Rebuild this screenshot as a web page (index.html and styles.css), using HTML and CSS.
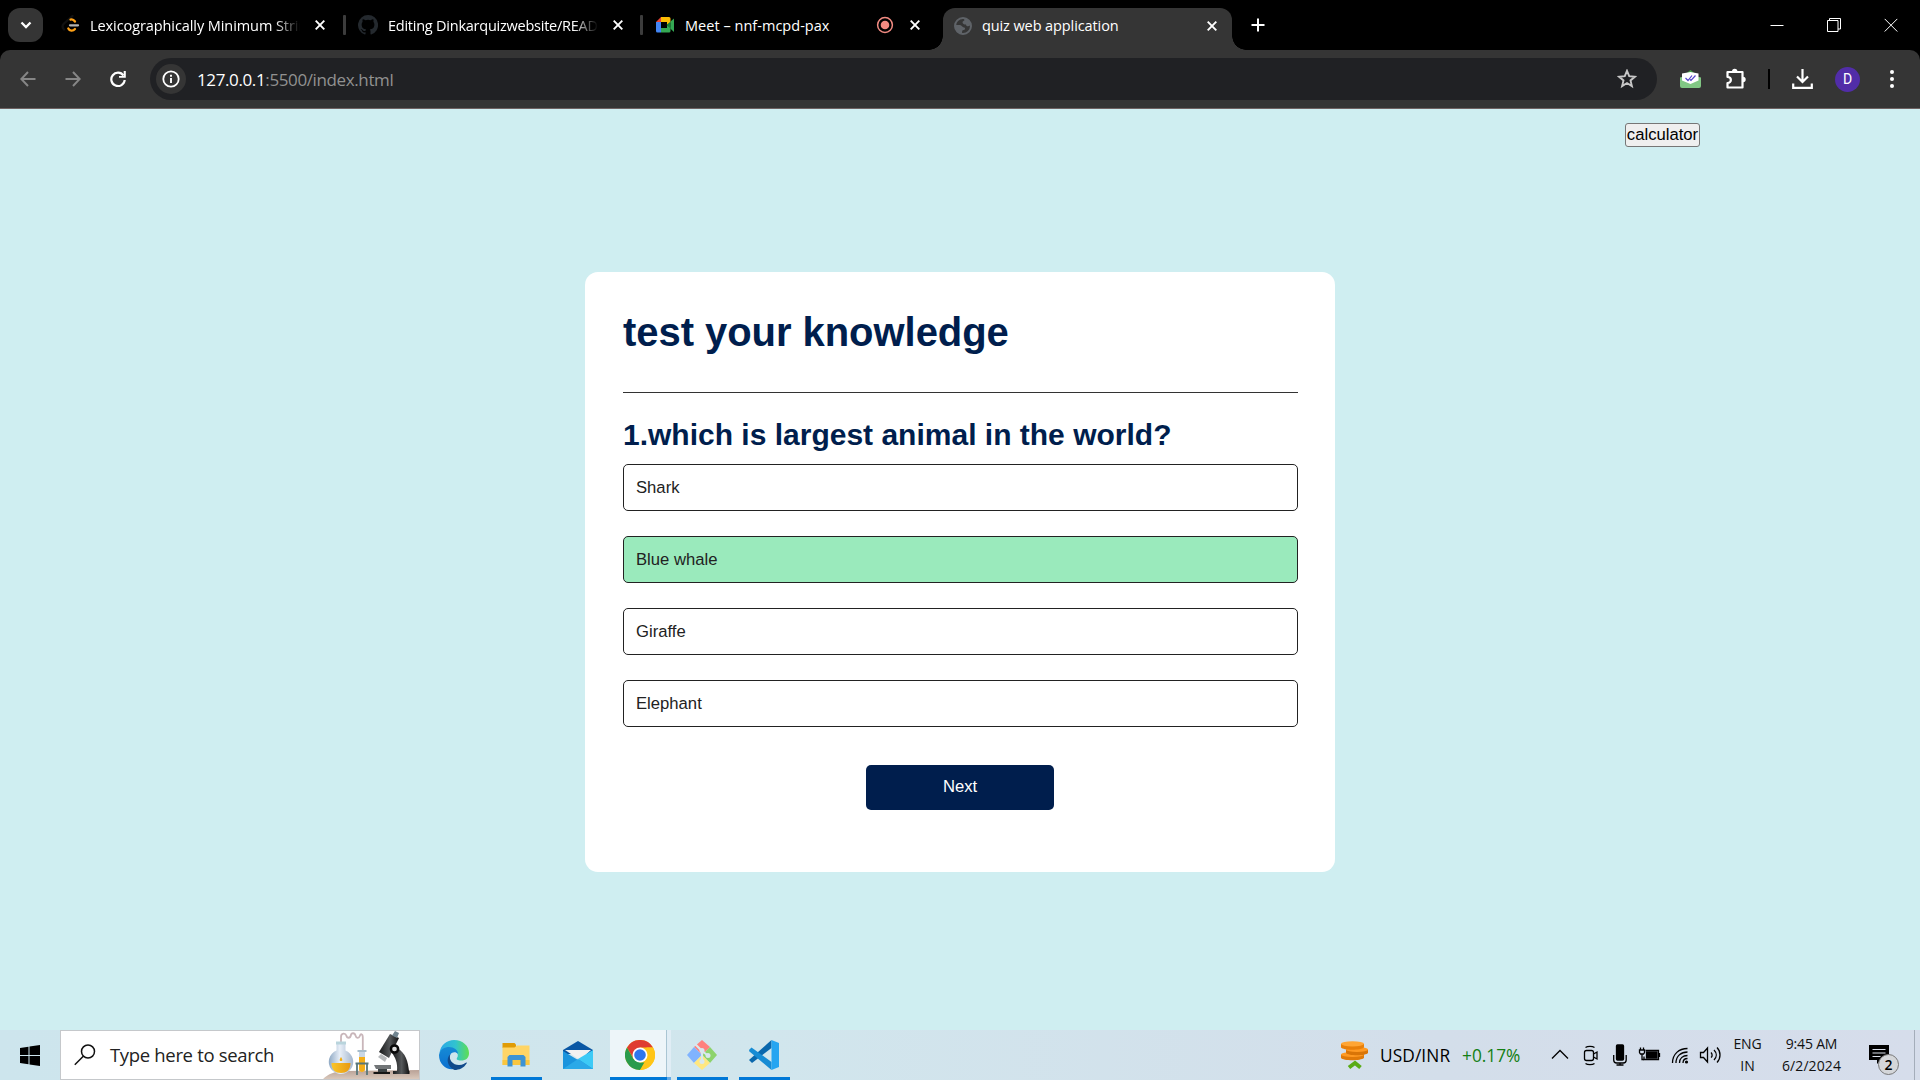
FILE: index.html
```html
<!DOCTYPE html>
<html lang="en">
<head>
<meta charset="utf-8">
<title>quiz web application</title>
<link rel="stylesheet" href="styles.css">
</head>
<body>
<header class="tabstrip">
  <div class="tab-search"><svg width="12" height="8" viewBox="0 0 12 8"><path d="M1.5 1.5 6 6l4.500-4.500" fill="none" stroke="#fff" stroke-width="2.300"/></svg></div>
  <div class="tab tab-first">
    <svg class="fav" viewBox="0 0 20 20" fill="none" stroke-width="2.300" stroke-linecap="round"><path d="M12.500 1 4 8.500c-2 2-2 4 0 6" stroke="#111"/><path d="M10.500 4.600c1.800-.6 3.300.2 4.500 1.900M8.300 13.500c1.200 2.400 4.600 2.900 6.700.5" stroke="#ffa116"/><path d="M10 10.300h8" stroke="#b3b3b3"/></svg>
    <span class="title t1 fade">Lexicographically Minimum Strin</span>
    <svg class="x" viewBox="0 0 10 10"><path d="m.7.7 8.600 8.600m0-8.600L.7 9.300"/></svg>
  </div>
  <i class="split"></i>
  <div class="tab tab-second">
    <svg class="fav" viewBox="0 0 16 16"><path fill="#24292e" d="M8 0a8 8 0 0 0-2.530 15.590c.4.070.55-.17.55-.38v-1.340c-2.230.48-2.700-1.070-2.700-1.070-.36-.92-.89-1.170-.89-1.170-.73-.5.050-.49.050-.49.810.060 1.230.83 1.230.83.72 1.230 1.880.87 2.330.66.070-.52.280-.87.510-1.070-1.780-.2-3.640-.89-3.640-3.950 0-.87.310-1.590.82-2.150-.08-.2-.36-1.020.080-2.120 0 0 .67-.21 2.200.82a7.600 7.600 0 0 1 4 0c1.530-1.040 2.200-.82 2.200-.82.440 1.100.160 1.920.080 2.120.51.56.82 1.270.82 2.150 0 3.070-1.870 3.750-3.650 3.950.29.250.54.730.54 1.480v2.190c0 .21.150.46.550.38A8 8 0 0 0 8 0"/></svg>
    <span class="title t2 fade">Editing Dinkarquizwebsite/READ</span>
    <svg class="x" viewBox="0 0 10 10"><path d="m.7.7 8.600 8.600m0-8.600L.7 9.300"/></svg>
  </div>
  <i class="split"></i>
  <div class="tab tab-meet">
    <svg class="fav" viewBox="0 0 20 20"><path fill="#ea4335" d="M1 7 6 2v5z"/><path fill="#4285f4" d="M1 7h5v6H1zM1 13h5v4.500H2.500A1.500 1.500 0 0 1 1 16z"/><path fill="#fbbc04" d="M6 2h8a1.500 1.500 0 0 1 1.500 1.500v4L12 10V7H6z"/><path fill="#34a853" d="M6 13h6v-3l3.500 2.500v3.500a1.500 1.500 0 0 1-1.500 1.500H6z"/><path fill="#188038" d="m11.500 10 4-3.500v7z"/><path fill="#34a853" d="m15.500 6.500 3.500-3v13.500l-3.500-3.300z"/></svg>
    <span class="title t3">Meet – nnf-mcpd-pax</span>
    <svg class="rec" viewBox="0 0 18 18"><circle cx="9" cy="9" r="7.400" fill="none" stroke="#f28b82" stroke-width="1.500"/><circle cx="9" cy="9" r="4.300" fill="#f28b82"/></svg>
    <svg class="x" viewBox="0 0 10 10"><path d="m.7.7 8.600 8.600m0-8.600L.7 9.300"/></svg>
  </div>
  <div class="tab tab-active">
    <svg class="globe" viewBox="0 0 18 18"><circle cx="9" cy="9" r="8" fill="none" stroke="#5f6368" stroke-width="2"/><path fill="#5f6368" d="M1.500 8h4.500c2 0 2 2.500 4 2.500 1.500 0 1.500 2.500-.5 2.500-1.500 0-1.500 2-1.500 4L3 15 1 10zM9.500 1l3 .5 3.500 3.500.5 3c-2 2-4.500 1.500-4.500-.5-2 0-3.500-.5-3.500-2.500 0-1 2-1 2-2z"/></svg>
    <span class="title t4">quiz web application</span>
    <svg class="x" viewBox="0 0 10 10"><path d="m.7.7 8.600 8.600m0-8.600L.7 9.300"/></svg>
  </div>
  <svg class="plus" viewBox="0 0 14 14"><path d="M7 .5v13M.5 7h13" stroke="#fff" stroke-width="2"/></svg>
  <div class="window-controls">
    <svg viewBox="0 0 14 14"><path d="M.5 7.500h13"/></svg>
    <svg viewBox="0 0 14 14"><path d="M.5 2.500h10.500v11H.5zM2.500 2.500v-2h11v10.500h-2.500"/></svg>
    <svg viewBox="0 0 14 14"><path d="m.7.9 12.600 12.600m0-12.600L.7 13.500"/></svg>
  </div>
</header>

<nav class="toolbar">
  <svg class="nav-icon dim" viewBox="0 0 16 16"><path d="M15.500 8H1.500M8 1 1.300 8 8 15"/></svg>
  <svg class="nav-icon dim" viewBox="0 0 16 16"><path d="M.5 8h14M8 1l6.700 7L8 15"/></svg>
  <svg class="nav-icon reload" viewBox="0 0 16 16"><path d="M13.500 4.500A6.700 6.700 0 1 0 14.700 9"/><path d="M15.800 0v6.800H9V5h4.700V0z" fill="#fff" stroke="none"/></svg>
  <div class="omnibox">
    <span class="site-info"><svg width="18" height="18" viewBox="0 0 18 18"><circle cx="9" cy="9" r="7.700" fill="none" stroke="#fff" stroke-width="1.800"/><path d="M9 8v5M9 4.800v1.900" stroke="#fff" stroke-width="1.900"/></svg></span>
    <span class="url"><b>127.0.0.1</b>:5500/index.html</span>
    <svg class="star" viewBox="0 0 20 20"><path d="m10 1.800 2.200 5.400 5.700.5-4.400 3.700 1.400 5.700L10 14l-4.900 3.100 1.400-5.700-4.400-3.700 5.700-.5z" fill="none" stroke="#c7c7c7" stroke-width="1.900"/></svg>
  </div>
  <svg class="mail-ext" viewBox="0 0 21 19"><path fill="#43a047" d="m10.500 0 5 4h-10z"/><path fill="#81c784" d="M0 7.500 10.500 5 21 7.500V16a2 2 0 0 1-2 2H2a2 2 0 0 1-2-2z"/><path fill="#fff" d="M2 3.500 10.500 2 18.500 3.500v7l-8 3.500L2 10.500z"/><path d="m5.500 8 2.500 2.500L12 5.500M10 9.500l1 1 4.500-5" fill="none" stroke="#5546c8" stroke-width="1.200"/></svg>
  <svg class="puzzle" viewBox="0 0 22 22"><path d="M2.500 4h15v15.500h-15v-4.500c4.500 0 4.500-6 0-6z" fill="none" stroke="#fff" stroke-width="2.200" stroke-linejoin="round"/><path fill="#fff" d="M7 3.500a2.700 2.700 0 0 1 5.400 0zM18 8.800a2.700 2.700 0 0 1 0 5.400z"/></svg>
  <i class="tool-split"></i>
  <svg class="download" viewBox="0 0 21 20"><path d="M10.500 0v12.500M5 7.500l5.500 5.500L16 7.500M1.200 14.500v4.300h18.600v-4.300" fill="none" stroke="#fff" stroke-width="2.200"/></svg>
  <span class="avatar">D</span>
  <svg class="dots" viewBox="0 0 4 18"><circle cx="2" cy="2" r="2"/><circle cx="2" cy="9" r="2"/><circle cx="2" cy="16" r="2"/></svg>
</nav>

<main class="page">
  <button class="calculator">calculator</button>
  <section class="quiz">
    <h1>test your knowledge</h1>
    <h2>1.which is largest animal in the world?</h2>
    <div class="answers">
      <button>Shark</button>
      <button class="correct">Blue whale</button>
      <button>Giraffe</button>
      <button>Elephant</button>
    </div>
    <button class="next">Next</button>
  </section>
</main>

<footer class="taskbar">
  <div class="start"><svg width="20" height="21" viewBox="0 0 20 21"><path d="M0 3 8.500 1.800V10H0zM9.500 1.600 20 0v10H9.500zM0 11h8.500v8.300L0 18zM9.500 11H20v10L9.500 19.400z"/></svg></div>
  <div class="search">
    <svg class="lens" viewBox="0 0 22 22"><circle cx="14" cy="7.500" r="6.500"/><path d="M9.300 12.300.8 20.800"/></svg>
    <span class="search-text">Type here to search</span>
    <svg class="art" viewBox="0 0 96 48">
      <defs>
        <linearGradient id="glass" x1="0" x2="1"><stop offset="0" stop-color="#8fa9c4"/><stop offset=".45" stop-color="#e8eff8"/><stop offset="1" stop-color="#a4b6cd"/></linearGradient>
        <linearGradient id="gold" x1="0" x2="1"><stop offset="0" stop-color="#fac52a"/><stop offset="1" stop-color="#e89a12"/></linearGradient>
        <linearGradient id="desk" x1="0" x2="0" y1="0" y2="1"><stop offset="0" stop-color="#b9a196"/><stop offset="1" stop-color="#d9c8bb"/></linearGradient>
        <linearGradient id="steel" x1="0" x2="1"><stop offset="0" stop-color="#161819"/><stop offset=".55" stop-color="#56595b"/><stop offset="1" stop-color="#111"/></linearGradient>
      </defs>
      <path d="M0 48c5-5 12-8 22-8l74-1v9z" fill="url(#desk)"/>
      <g transform="translate(1 0)">
      <path d="M17 11V6c0-4.500 4.500-4 5.300-1.500.7 3 4 3 4.500 0s4-3 4.700 0 3.500 3 4.300.5 3-2.500 3 1.500V20" fill="none" stroke="#c9b6ba" stroke-width="1.800"/>
      <path d="M12.500 11h9v8.500a12.200 12.200 0 1 1-9 0z" fill="url(#glass)"/>
      <path d="M7.500 32h19c0 7-4 10-9.500 10s-9.500-3-9.500-10z" fill="url(#gold)"/>
      <path d="M17 26c-2 3-1.500 4 0 4s2-1 0-4" fill="#f3ad14"/><path d="M12 10.500h10v3H12z" fill="#b9d4dc"/>
      <path d="M35 20h6v18a3 3 0 0 1-6 0z" fill="#c8d7e6"/><path d="M35 26h6v12a3 3 0 0 1-6 0z" fill="#f4ae19"/>
      <path d="M31.500 32.500h13M33 32v12M43 32v12" fill="none" stroke="#58777a" stroke-width="1.800"/><path d="M33.500 19h9v2h-9z" fill="#a7bdcc"/>
      <path d="m66 3 9 4-10 20-10-6z" fill="url(#steel)"/><path d="m71 0 4 2-2 5-5-2.500z" fill="#718590"/><path d="m57 23 6 4-2 4-7-5z" fill="#b5b8ba"/>
      <path d="M73 17c9 5 11 14 12 23h.5v3H69v-3h4c1-8-2-14-5-18z" fill="url(#steel)"/><circle cx="70.500" cy="18" r="3.600" fill="#ddd" stroke="#080808" stroke-width="2.500"/>
      <path d="M50 34h17v4H52z" fill="#727678"/><path d="M49.500 41H66v2H49.500z" fill="#151515"/><path d="M54 38h9v3h-9z" fill="#3c4244"/>
      </g>
    </svg>
  </div>
  <div class="apps">
    <div class="app"><svg viewBox="0 0 30 30"><defs><linearGradient id="ea" x1="0" x2="1"><stop offset="0" stop-color="#2aa7e8"/><stop offset=".55" stop-color="#31c3cf"/><stop offset="1" stop-color="#5fdf50"/></linearGradient><linearGradient id="eb" x1="0" x2="0" y1="0" y2="1"><stop offset="0" stop-color="#168bd5"/><stop offset="1" stop-color="#0b6fcf"/></linearGradient></defs><path fill="url(#ea)" d="M.5 13C1.500 5 8 0 15 0c9 0 15 6 15 13 0 5-3 7.500-8 7.500-3.500 0-5-1-4-2.500 1.500-2 1-5-1.500-6.500C12 8 4 8 .5 13z"/><path fill="url(#eb)" d="M0 15C1 9 6 7 10 7c5 0 9 3 9 7-2-3-7-2-8 1-2 6 2 11 7 13-8 4-18-2-18-13z"/><path fill="#114a8b" d="M11.500 14C9 20 14 25 20 25c4 0 6-2 7.500-2.500.5 0 .5.500 0 1C25 28 20 30 15.500 30 9 27 6 19 11.500 14z"/></svg></div>
    <div class="app running"><svg viewBox="0 0 30 30"><path fill="#e09b05" d="M1.500 3h12l1.500 1.500V8H1.500z"/><path fill="#ffd566" d="M1.500 7.500h12l2.500-2h12.500V25h-27z"/><path fill="#f9c63f" d="M1.500 20h27v5h-27z"/><path fill="#3c93d4" d="M8.500 15h14l2 2v9.500h-5V20h-8v6.500h-5V17z"/></svg></div>
    <div class="app"><svg viewBox="0 0 30 30"><path fill="#0a57a4" d="M0 10 15 1l15 9v4H0z"/><path fill="#f2f1f1" d="M2 10h26L17 20z"/><path fill="#1b94dd" d="M0 11v18h30V11L15 20z"/><path fill="#3dcaf6" d="m30 10-15 9 15 10z"/><path fill="#2ba9e8" d="M0 29 15 19l15 10z"/></svg></div>
    <div class="app running focused"><svg viewBox="0 0 30 30"><circle cx="15" cy="15" r="15" fill="#ffc517"/><path fill="#df3d31" d="M2 7.500a15 15 0 0 1 26 0H15l-6.500 11z"/><path fill="#2a9b4c" d="M2 7.500 8.500 19 15 22.500h6.500L15 30A15 15 0 0 1 2 7.500z"/><path fill="#ffc517" d="M28 7.500A15 15 0 0 1 15 30l6.500-11.200V7.500z"/><circle cx="15" cy="15" r="7.500" fill="#fff"/><circle cx="15" cy="15" r="5.800" fill="#2f76ed"/></svg></div>
    <div class="app running"><svg viewBox="0 0 30 30"><path fill="#ff817e" d="M15 0 7 7l8 8 8-8z"/><path fill="#80b3ff" d="M7 7 0 15l7 8 8-8z"/><path fill="#8dd36c" d="m23 7 7 8-7 8-8-8z"/><path fill="#ffe780" d="m15 15-8 8 8 7 8-7z"/><path d="m8 4 7 7v12M15 11l6.500 5" fill="none" stroke="#d8e8ef" stroke-width="2.200"/><g fill="#d8e8ef"><circle cx="15" cy="10.500" r="2.500"/><circle cx="15" cy="21.500" r="2.500"/><circle cx="21" cy="15.500" r="2.500"/></g></svg></div>
    <div class="app running"><svg viewBox="0 0 30 30"><path fill="#0a68ad" d="M0 20 22.500 0v8L3 23z"/><path fill="#178cd4" d="m0 10 2.500-2.500L22.500 22v8L.5 11.500z"/><path fill="#26a5f1" d="m22.500 0 7.500 3v24l-7.500 3z"/></svg></div>
  </div>
  <div class="finance">
    <svg width="29" height="30" viewBox="0 0 29 30"><path d="M1 14.500v3.500c2 3 20 3 23 0v-3.500z" fill="#e07a08"/><ellipse cx="12.500" cy="14.500" rx="11.500" ry="2.500" fill="#ff9a22"/><path d="M6 9.500v3.500c2 3 20 3 22 0V9.500z" fill="#d97507"/><ellipse cx="17" cy="9.500" rx="11" ry="2.500" fill="#ff9a22"/><path d="M1 4v3.500c2 3 20 3 23 0V4z" fill="#e87f0a"/><ellipse cx="12.500" cy="3.800" rx="11.500" ry="2.600" fill="#ffa534"/><path d="m9 27.500 6-4.500 5.500 4.500" fill="none" stroke="#5aab16" stroke-width="4"/></svg>
    <span class="pair">USD/INR</span><span class="gain">+0.17%</span>
  </div>
  <div class="tray">
    <svg viewBox="0 0 24 24"><path d="m4 15.500 8-8 8 8"/></svg>
    <svg viewBox="0 0 24 24"><rect x="6.500" y="7.500" width="9" height="10" rx="2"/><path d="m15.500 11 3.500-2v7l-3.500-2M7.500 4.500c2-1.500 7-1.500 9 0M7.500 20.500c2 1.500 7 1.500 9 0"/></svg>
    <svg viewBox="0 0 24 24"><rect x="8.500" y="2" width="7" height="15" rx="1" fill="#000"/><path d="M5.700 12v5c0 2 1 3 3 3h6.500c2 0 3-1 3-3v-5M12 20v2M8.500 22h7"/></svg>
    <svg viewBox="0 0 24 24"><path d="M7.500 7.500h13v9H6v-3"/><path d="M8.500 9h10.500v6H8.500z" fill="#000"/><path d="M21.500 10v4M2.500 4.500v2.500M5.500 4.500v2.500M1.500 7h5v2.500L5.500 11h-3l-1-1.500zM4 11v5.500h2"/></svg>
    <svg viewBox="0 0 24 24"><path d="M4.500 20C4.500 11 11 5.500 19.500 5.500M8 20c0-7 5-11 11.500-11M11.500 20c0-5 3.500-7.500 8-7.500M15 20c0-3 2-4.500 4.500-4.500"/><circle cx="18.500" cy="19" r="1.600" fill="#000" stroke="none"/></svg>
    <svg viewBox="0 0 24 24"><path d="M2.500 9.500h3L9.500 5v14l-4-4.500h-3zM13 9.500c1.500 1.500 1.500 4 0 5M16 7c3 3 3 7 0 10M19 4.500c4 4 4 11 0 15"/></svg>
  </div>
  <div class="lang"><span>ENG</span><span>IN</span></div>
  <div class="clock"><span class="time">9:45 AM</span><span class="date">6/2/2024</span></div>
  <div class="notice"><svg width="20" height="20" viewBox="0 0 20 20"><path d="M0 0h20v15h-8l-4 4v-4H0z"/><path d="M3.500 4.500h13M3.500 8h13M3.500 11.500h8" stroke="#d9dfea" stroke-width="1.200"/></svg><span class="count">2</span></div>
  <i class="show-desktop"></i>
</footer>
</body>
</html>
```
FILE: styles.css
```css
* { box-sizing: border-box; }
body {
  margin: 0;
  width: 1920px;
  height: 1080px;
  overflow: hidden;
  display: flex;
  flex-direction: column;
  background: #000;
  font-family: "Open Sans", "Noto Sans", sans-serif;
}
svg { display: block; flex: none; }
button { font-family: "Liberation Sans", Arial, sans-serif; font-size: 16.667px; }

/* Tab strip */
.tabstrip { height: 50px; flex: none; display: flex; align-items: center; padding-left: 8px; color: #fff; }
.tab-search { width: 35px; height: 34px; border-radius: 12px; background: #353535; display: flex; align-items: center; justify-content: center; margin-right: 3px; }
.tab { height: 42px; display: flex; align-items: center; padding-left: 12px; }
.tab-first { width: 297px; padding-left: 14px; padding-right: 18px; }
.tab-second { width: 294px; padding-right: 17px; }
.tab-meet { width: 300px; padding-right: 23px; }
.tab-active { position: relative; width: 289px; align-self: flex-end; padding: 0 15px 7px 11px; background: #353535; border-radius: 12px 12px 0 0; }
.tab-active::before, .tab-active::after { content: ""; position: absolute; bottom: 0; width: 14px; height: 14px; }
.tab-active::before { left: -14px; background: radial-gradient(circle at 0 0, transparent 13.5px, #353535 14px); }
.tab-active::after { right: -14px; background: radial-gradient(circle at 100% 0, transparent 13.5px, #353535 14px); }
.split { width: 3px; height: 20px; border-radius: 1px; background: #3c3c3c; }
.fav { width: 20px; height: 20px; margin-right: 10px; }
.globe { width: 18px; height: 18px; margin-right: 10px; }
.title { flex: 1; min-width: 0; padding-top: 1px; font-size: 14.5px; line-height: 24px; white-space: nowrap; }
.t1 { letter-spacing: -.08px; }
.t2 { letter-spacing: -.24px; }
.t3 { letter-spacing: .03px; }
.t4 { letter-spacing: -.1px; padding-top: 0; }
.fade { -webkit-mask-image: linear-gradient(90deg, #000 185px, transparent 210px); mask-image: linear-gradient(90deg, #000 185px, transparent 210px); }
.x { width: 10px; height: 10px; margin-left: 15px; fill: none; stroke: #fff; stroke-width: 1.9; }
.rec { width: 18px; height: 18px; }
.tab-meet .x { margin-left: 16px; }
.plus { width: 14px; height: 14px; margin-left: 19px; }
.window-controls { display: flex; gap: 43px; margin-left: auto; margin-right: 22px; }
.window-controls svg { width: 14px; height: 14px; fill: none; stroke: #fff; stroke-width: 1; }

/* Toolbar */
.toolbar { height: 59px; flex: none; display: flex; align-items: center; padding-left: 20px; background: #353535; border-bottom: 1px solid #6f6262; border-radius: 10px 10px 0 0; }
.nav-icon { width: 16px; height: 16px; margin-right: 29px; fill: none; stroke: #fff; stroke-width: 2; }
.nav-icon.dim { stroke: #868686; }
.nav-icon.reload { margin-right: 24px; stroke-width: 2.2; }
.omnibox { width: 1507px; height: 42px; border-radius: 21px; background: #202124; display: flex; align-items: center; padding: 0 20px 0 6px; }
.site-info { width: 30px; height: 30px; border-radius: 50%; background: #353535; display: flex; align-items: center; justify-content: center; margin-right: 11px; }
.url { flex: 1; color: #919191; font-size: 17px; letter-spacing: -.38px; white-space: nowrap; }
.url b { color: #fff; font-weight: 400; }
.star { width: 20px; height: 20px; }
.mail-ext { width: 21px; height: 19px; margin-left: 23px; }
.puzzle { width: 22px; height: 22px; margin-left: 24px; }
.tool-split { width: 2px; height: 20px; margin-left: 21px; background: #000; }
.download { width: 21px; height: 20px; margin-left: 22px; }
.avatar { width: 25px; height: 25px; border-radius: 50%; background: #512da8; color: #fff; font: 14px/25px Roboto, sans-serif; text-align: center; margin-left: 22px; }
.dots { width: 4px; height: 18px; margin-left: 30px; fill: #fff; }

/* Quiz page */
.page { height: 921px; flex: none; display: flex; flex-direction: column; background: #cfeef1; }
.calculator { width: 75px; height: 24px; margin: 14px 0 0 1625px; padding: 0; border: 1px solid #767676; border-radius: 3px; background: #efefef; color: #000; line-height: 22px; white-space: nowrap; }
.quiz { width: 750px; height: 600px; align-self: center; margin-top: 125px; padding: 38px 37px 0 38px; border-radius: 13px; background: #fff; }
h1, h2 { margin: 0; color: #001e4d; font-family: "Liberation Sans", Arial, sans-serif; font-weight: 700; }
h1 { height: 83px; font-size: 40px; line-height: 45px; letter-spacing: -.05px; border-bottom: 1px solid #333; }
h2 { margin-top: 24px; font-size: 30px; line-height: 35px; white-space: nowrap; }
.answers { display: flex; flex-direction: column; gap: 25px; margin-top: 12px; }
.answers button { height: 47px; padding: 0 12px; border: 1px solid #222; border-radius: 5px; background: #fff; color: #222; text-align: left; }
.answers .correct { background: #9aeabc; }
.next { display: block; width: 188px; height: 45px; margin: 38px 0 0 243px; padding: 0 0 2px; border: 0; border-radius: 5px; background: #001e4d; color: #fff; }

/* Taskbar */
.taskbar { height: 50px; flex: none; display: flex; align-items: center; background: linear-gradient(90deg, #cde5ed 0, #d1e6ed 40%, #d3deea 75%, #d6ddeb 100%); color: #000; }
.start { width: 60px; padding-left: 20px; }
.search { width: 360px; height: 50px; display: flex; align-items: center; border: 1px solid #c5c8cb; background: #fff; }
.lens { width: 22px; height: 22px; margin: 0 14px 0 13px; fill: none; stroke: #111; stroke-width: 1.5; }
.search-text { flex: 1; padding-bottom: 2px; font-size: 18.5px; color: #222; letter-spacing: -.33px; white-space: nowrap; }
.art { width: 96px; height: 48px; }
.apps { display: flex; height: 50px; margin-left: 3px; }
.app { width: 62px; height: 50px; display: flex; align-items: center; justify-content: center; position: relative; }
.app svg { width: 30px; height: 30px; }
.running::after { content: ""; position: absolute; left: 6px; bottom: 0; width: 51px; height: 3px; background: #0078d7; }
.focused { background: linear-gradient(90deg, transparent 1px, #edf5f9 1px 57px, #a9c5d3 57px 58px, #e0edf5 58px); }
.focused::after { left: 1px; width: 61px; background: linear-gradient(90deg, #0078d7 57px, #62a9e5 57px); }
.finance { display: flex; align-items: center; width: 205px; margin-left: 545px; font-size: 17.3px; white-space: nowrap; }
.pair { width: 71px; margin-left: 11px; letter-spacing: .1px; }
.gain { margin-left: 11px; color: #138013; letter-spacing: 0; }
.tray { display: flex; gap: 6px; padding: 0 3px; }
.tray svg { width: 24px; height: 24px; fill: none; stroke: #000; stroke-width: 1.3; }
.lang, .clock { display: flex; flex-direction: column; align-items: center; font-size: 14px; line-height: 22px; white-space: nowrap; color: #111; }
.lang { width: 45px; letter-spacing: -.1px; }
.clock { width: 83px; letter-spacing: -.2px; }
.date { letter-spacing: .1px; }
.notice { position: relative; width: 46px; height: 20px; padding-left: 16px; }
.count { position: absolute; left: 25px; top: 9px; width: 21px; height: 21px; border: 1px solid #777; border-radius: 50%; background: #d4d6d9; font-size: 14px; font-weight: 600; line-height: 19px; text-align: center; }
.show-desktop { width: 1px; height: 50px; margin-left: 15px; background: #a4adba; }
```
